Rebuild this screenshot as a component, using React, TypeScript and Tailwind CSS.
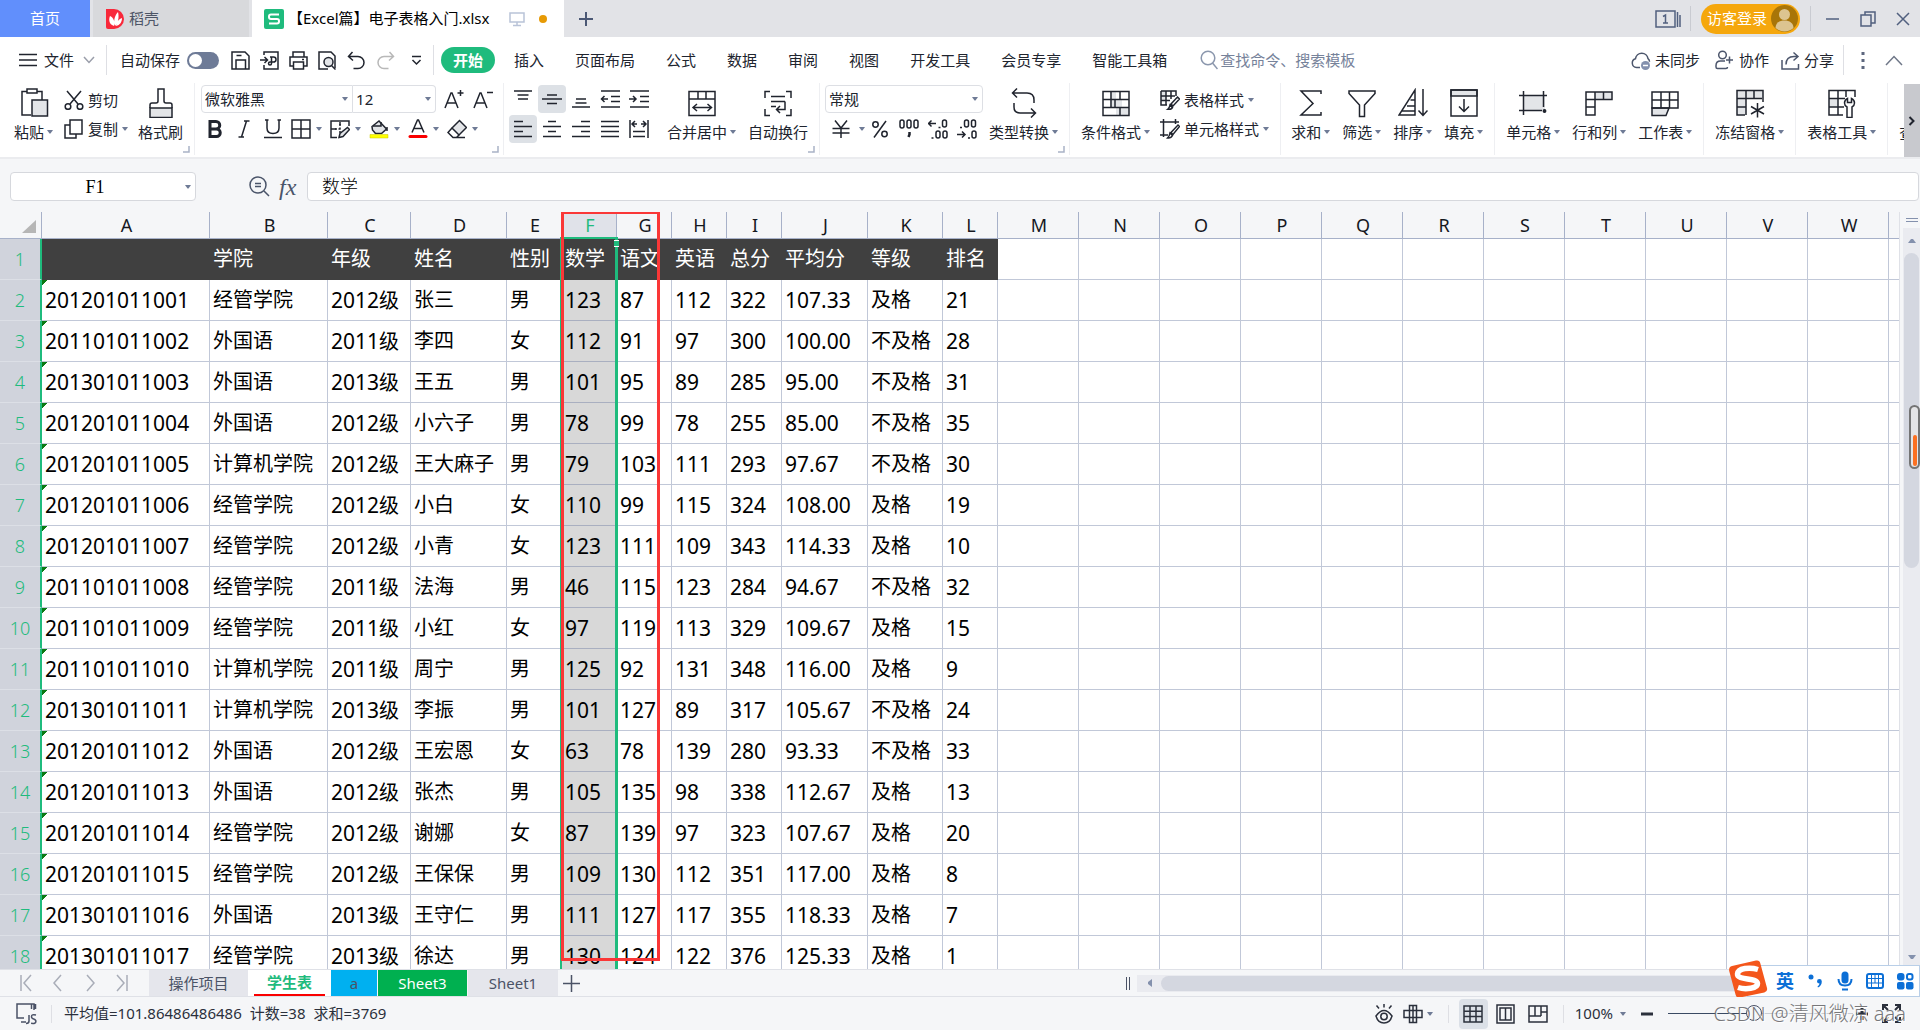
import type { ReactNode } from "react";

const UI = "font-['Noto_Sans','Noto_Sans_CJK_SC',sans-serif]";

/* ---------- drawing helpers ---------- */

function Svg({ w = 20, h = 20, sw = 1.5, children }: { w?: number; h?: number; sw?: number; children: ReactNode }) {
  return (
    <svg width={w} height={h} viewBox={`0 0 ${w} ${h}`} fill="none" stroke="currentColor" strokeWidth={sw} className="shrink-0" aria-hidden="true">
      {children}
    </svg>
  );
}

function Arrow() {
  return (
    <svg width="6" height="4" viewBox="0 0 6 4" className="shrink-0" aria-hidden="true">
      <path d="M0 0h6L3.5 3.5h-1z" fill="#6f7b96" />
    </svg>
  );
}

const shade = "#e3e5e8";

/* ---------- title bar ---------- */

function TitleBar() {
  return (
    <header className="flex h-[37px] shrink-0 items-center bg-[#e2e3e7] text-[15px]">
      <button className="h-full w-[90px] bg-[#618ffc] text-white">首页</button>
      <button className="ml-[3px] flex h-full w-[156px] items-center gap-1 bg-[#d8d9dc] pl-[13px] text-[#4d5566]">
        <Svg w={19} h={20} sw={0}>
          <path d="M0 0h8a10 10 0 0 1 10 10a10 10 0 0 1-10 10H2a2 2 0 0 1-2-2z" fill="#f8283a" />
          <path d="M8 17C2 15 3 9 4 7c4 2 5 6 4 10zM9 17c-2-5 0-11 3-14c1 4 1 10-3 14zM10 17c1-5 3-7 6-8c0 4-2 7-6 8z" fill="#fff" />
        </Svg>
        稻壳
      </button>
      <button className="ml-[3px] flex h-full w-[312px] items-center bg-white pl-3 text-black">
        <Svg w={20} h={20} sw={2}>
          <rect width="20" height="20" rx="2" fill="#1fbb7d" stroke="none" />
          <path d="M15 5.500H7a2 2 0 0 0-2 2v.5a2 2 0 0 0 2 2h6a2 2 0 0 1 2 2v.5a2 2 0 0 1-2 2H5" stroke="#fff" />
        </Svg>
        <span className="ml-1 whitespace-nowrap">【Excel篇】电子表格入门.xlsx</span>
        <span className="ml-5 text-[#b9c3d8]">
          <Svg w={16} h={16}>
            <path d="M1 2h14v9H1zM8 11v3M4 14.500h8" />
          </Svg>
        </span>
        <span className="ml-[14px] size-2 rounded-full bg-[#e79a05]" />
      </button>
      <button className="ml-[14px] text-[#4b5875]" aria-label="新建标签">
        <Svg w={16} h={16} sw={2}>
          <path d="M8 1v14M1 8h14" />
        </Svg>
      </button>
      <div className="ml-auto flex items-center text-[#51607f]">
        <button aria-label="窗口数">
          <Svg w={26} h={20}>
            <path d="M1 2h19v16H1zM22.500 3v15M25 6v12" />
            <path d="M8 7.500l2.500-1.500v8M8 14h5" />
          </Svg>
        </button>
        <span className="ml-[9px] h-[25px] w-px bg-[#c9cbd1]" />
        <button className="ml-[10px] flex h-[30px] w-[99px] items-center gap-1 rounded-full bg-[#f5a70d] pl-[6px] text-white">
          <span className="whitespace-nowrap">访客登录</span>
          <Svg w={27} h={27} sw={0}>
            <circle cx="13.500" cy="13.500" r="13.500" fill="#a87508" />
            <circle cx="13.500" cy="9.500" r="5.500" fill="#dcc490" />
            <path d="M4.500 23c0-5 4-7.500 9-7.500s9 2.500 9 7.500a13.500 13.500 0 0 1-18 0z" fill="#dcc490" />
          </Svg>
        </button>
        <span className="ml-[10px] h-[25px] w-px bg-[#c9cbd1]" />
        <button className="ml-[15px]" aria-label="最小化">
          <Svg w={13} h={14}>
            <path d="M0 7h13" />
          </Svg>
        </button>
        <button className="ml-[21px]" aria-label="还原">
          <Svg w={16} h={16}>
            <path d="M5 4V1h10v11h-4M1 4h10v11H1z" />
          </Svg>
        </button>
        <button className="mr-[10px] ml-5" aria-label="关闭">
          <Svg w={14} h={14}>
            <path d="M1 1l12 12M13 1L1 13" />
          </Svg>
        </button>
      </div>
    </header>
  );
}

/* ---------- menu row ---------- */

const MENUS = ["插入", "页面布局", "公式", "数据", "审阅", "视图", "开发工具", "会员专享", "智能工具箱"];

const QUICK: [string, ReactNode][] = [
  ["保存", <path key="p" d="M1 1h13l4 4v13H1zM5 18V9h9.500v9M5.500 4.500h5" />],
  ["输出", <path key="p" d="M4 4V1h14v17H4v-4M0 9h7M4.500 6L7.500 9l-3 3M10 6h3.500a2.500 2.500 0 0 1 0 5H12M11.500 6v6.500a1.500 1.500 0 1 1-1.500-1.500h5" />],
  ["打印", <path key="p" d="M4 6V1h11v5M4 15H1V6h17v9h-3M4.500 11h10v7h-10zM13 8.500h2" />],
  [
    "打印预览",
    <g key="p">
      <path d="M10 18H1V1h12l4 4v12" />
      <circle cx="10.500" cy="11" r="4.500" fill={shade} />
      <path d="M13.500 14.500l4 4" />
    </g>,
  ],
];

function Divider() {
  return <span className="h-[30px] w-px shrink-0 bg-[#dedfe4]" />;
}

function MenuRow() {
  return (
    <nav className="flex h-[46px] shrink-0 items-center bg-white text-[15px] whitespace-nowrap text-[#20242e]">
      <button className="flex items-center pl-[19px]">
        <Svg w={18} h={14}>
          <path d="M0 1.500h18M0 7h18M0 12.500h18" />
        </Svg>
        <span className="ml-[7px]">文件</span>
        <span className="ml-[9px] text-[#9a9eaa]">
          <Svg w={12} h={8}>
            <path d="M1 1l5 5.500L11 1" />
          </Svg>
        </span>
      </button>
      <span className="ml-[11px]" />
      <Divider />
      <label className="ml-[13px] flex items-center gap-[7px]">
        自动保存
        <input
          type="checkbox"
          className="h-[17px] w-8 appearance-none rounded-full bg-[#6e7b97] before:mt-[2px] before:ml-[2px] before:block before:size-[13px] before:rounded-full before:bg-white"
        />
      </label>
      <div className="ml-3 flex items-center gap-[10px]">
        {QUICK.map(([name, art]) => (
          <button key={name} aria-label={name}>
            <Svg w={19} h={19}>{art}</Svg>
          </button>
        ))}
        <button aria-label="撤销">
          <Svg w={19} h={19}>
            <path d="M5.500 1L1.500 5.500L6 9.500M2 5.500h9a6 6 0 0 1 0 12H6.500" />
          </Svg>
        </button>
        <button className="text-[#b8b8b8]" aria-label="恢复">
          <Svg w={19} h={19}>
            <path d="M13.500 1l4 4.500L13 9.500M17 5.500H8a6 6 0 0 0 0 12h4.500" />
          </Svg>
        </button>
        <button className="ml-[6px]" aria-label="自定义快速访问">
          <Svg w={11} h={12}>
            <path d="M1 2.500h9M1.500 6l4 4l4-4" />
          </Svg>
        </button>
      </div>
      <span className="ml-[11px]" />
      <Divider />
      <button className="ml-[7px] h-[26px] w-[54px] rounded-full bg-[#1fbb7d] font-bold text-white">开始</button>
      <div className="ml-[19px] flex gap-[31px]">
        {MENUS.map((m) => (
          <button key={m}>{m}</button>
        ))}
      </div>
      <label className="ml-[33px] flex items-center gap-[2px] text-[#8b97ad]">
        <Svg w={18} h={20}>
          <circle cx="8" cy="8" r="6.800" />
          <path d="M12.500 13l5 6" />
        </Svg>
        <input aria-label="查找命令" placeholder="查找命令、搜索模板" className="w-[150px] bg-transparent outline-none placeholder:text-[#76829a]" />
      </label>
      <div className="ml-auto flex items-center">
        <button className="flex items-center gap-1">
          <Svg w={20} h={21}>
            <path d="M9 17.500H5.500a4.500 4.500 0 0 1-1-8.800a6.300 6.300 0 0 1 12.500 0a4 4 0 0 1 1.500 3" stroke="#4c566c" />
            <circle cx="14.500" cy="15.500" r="4.500" fill="#8390ad" stroke="none" />
            <path d="M12 15.500h5" stroke="#fff" />
          </Svg>
          未同步
        </button>
        <button className="ml-[15px] flex items-center gap-[5px]">
          <Svg w={19} h={20}>
            <g stroke="#4c566c">
              <circle cx="7.500" cy="5" r="3.800" />
              <path d="M10 11H5.500C2 11 1 13 1 15.500V17q0 1.500 1.500 1.500H11q1.500 0 1.500-1.500M14.500 6.500v7M11 10h7" />
            </g>
          </Svg>
          协作
        </button>
        <button className="ml-3 flex items-center gap-1">
          <Svg w={19} h={19}>
            <path d="M1 9v9h16.500v-5M5 13.500c0-5 3-8 8-8h3.500M12.500 1.500l4.500 4l-4.500 4" stroke="#4c566c" />
          </Svg>
          分享
        </button>
        <span className="ml-[9px]" />
        <Divider />
        <button className="ml-[17px]" aria-label="更多">
          <Svg w={4} h={18} sw={0}>
            <path d="M.5 1h3v3h-3zM.5 8h3v3h-3zM.5 15h3v3h-3z" fill="#5d677e" />
          </Svg>
        </button>
        <button className="mr-[17px] ml-5" aria-label="折叠功能区">
          <Svg w={18} h={11}>
            <path d="M1 10l8-8.500L17 10" stroke="#6f7788" />
          </Svg>
        </button>
      </div>
    </nav>
  );
}

/* ---------- ribbon ---------- */

function Group({ children, launcher }: { children: ReactNode; launcher?: boolean }) {
  return (
    <section className="flex shrink-0 flex-col border-r border-[#eeeff2]">
      <div className="flex h-[60px] px-[11px] pt-[2px]">{children}</div>
      {launcher && (
        <span className="mt-[3px] mr-1 self-end text-[#a9b2c6]">
          <Svg w={7} h={7}>
            <path d="M0 6h6V0" />
          </Svg>
        </span>
      )}
    </section>
  );
}

function Big({ label, arrow = true, children }: { label: string; arrow?: boolean; children: ReactNode }) {
  return (
    <button className="flex shrink-0 flex-col items-center pt-[3px]">
      <Svg w={30} h={30}>{children}</Svg>
      <span className="mt-1 flex items-center gap-[3px] leading-5">
        {label}
        {arrow && <Arrow />}
      </span>
    </button>
  );
}

function Small({ label, arrow, children }: { label: string; arrow?: boolean; children: ReactNode }) {
  return (
    <button className="flex h-7 items-center gap-1">
      <Svg>{children}</Svg>
      <span className="flex items-center gap-1">
        {label}
        {arrow && <Arrow />}
      </span>
    </button>
  );
}

function Tool({ label, active, children }: { label: string; active?: boolean; children: ReactNode }) {
  return (
    <button aria-label={label} className={`flex size-7 items-center justify-center rounded-sm ${active ? "bg-[#dde1e6]" : ""}`}>
      <Svg>{children}</Svg>
    </button>
  );
}

function DropTool({ label, children }: { label: string; children: ReactNode }) {
  return (
    <button aria-label={label} className="flex h-7 w-[38px] items-center gap-[5px] pl-[3px]">
      <Svg>{children}</Svg>
      <Arrow />
    </button>
  );
}

function Picker({ label, value, box }: { label: string; value: string; box: string }) {
  return (
    <span className={`flex h-7 items-center border border-[#dddfe4] bg-white pr-1 ${box}`}>
      <select aria-label={label} className="min-w-0 flex-1 appearance-none pl-[3px] outline-none">
        <option>{value}</option>
      </select>
      <Arrow />
    </span>
  );
}

function Ribbon() {
  return (
    <div className="flex h-[76px] shrink-0 overflow-hidden border-b-2 border-[#ebecef] bg-white text-[15px] whitespace-nowrap text-[#20242e]">
      <div className="flex min-w-0 flex-1 overflow-hidden pb-[2px]">
        <Group launcher>
          <span className="ml-[3px]" />
          <Big label="粘贴">
            <path d="M8 3.500H3V27h9M18 3.500h5V12" />
            <path d="M8 1h10v4H8z" fill="#fff" />
            <path d="M13 12h15.500v16H13z" fill={shade} />
          </Big>
          <div className="ml-[11px] flex flex-col gap-[2px] pt-px">
            <Small label="剪切">
              <path d="M3 1l11 13M17 1L6 14" />
              <circle cx="4" cy="16.500" r="2.800" />
              <circle cx="16" cy="16.500" r="2.800" />
            </Small>
            <Small label="复制" arrow>
              <path d="M6 6H1v13h11v-4M6 1h12v14H6z" />
            </Small>
          </div>
          <span className="ml-[10px]" />
          <Big label="格式刷" arrow={false}>
            <path d="M4 20h22v9.500H4z" fill={shade} />
            <path d="M4 20v-3q0-2 2-2h4q2 0 2-2V1h6v12q0 2 2 2h4q2 0 2 2v3" />
          </Big>
        </Group>

        <Group launcher>
          <div className="-mx-[5px] flex flex-col gap-[2px]">
            <div className="flex">
              <Picker label="字体" value="微软雅黑" box="w-[152px] rounded-l-sm" />
              <Picker label="字号" value="12" box="w-[83px] rounded-r-sm border-l-0" />
              <span className="ml-1 flex gap-px">
                <Tool label="增大字号">
                  <path d="M1 19L7 4h1l6 15M3 14h9M16.500 1v6M13.500 4h6" />
                </Tool>
                <Tool label="减小字号">
                  <path d="M1 19L7 4h1l6 15M3 14h9M14 3.500h6" />
                </Tool>
              </span>
            </div>
            <div className="flex gap-px">
              <Tool label="加粗">
                <path d="M5 2.500h6a3.500 3.500 0 0 1 0 7.500H5zM5 10h6.500a3.700 3.700 0 0 1 0 7.500H5z" strokeWidth="3" />
              </Tool>
              <Tool label="倾斜">
                <path d="M10 2h5.500M4.500 18H10M12.500 2L7.500 18" />
              </Tool>
              <Tool label="下划线">
                <path d="M4 1v8q0 5.500 6 5.500T16 9V1M2 1h3.500M14.500 1H18M1 18.500h18" />
              </Tool>
              <DropTool label="边框">
                <path d="M1 1h18v18H1zM10 1v18M1 10h18" />
              </DropTool>
              <DropTool label="绘图边框">
                <path d="M7 18.500H1V2h18v5M1 10h5M10 6V3" />
                <path d="M5 10h6M10 5v9" strokeDasharray="2 1.500" />
                <path d="M9 18.500l1-4l7.500-6l2 2L13 17.500z" fill={shade} />
              </DropTool>
              <DropTool label="填充颜色">
                <path d="M3 7.500L10 2l7.500 8l-5 4.500h-6L3.500 11z" fill={shade} />
                <path d="M4 7h8V3M18 8v4" />
                <path d="M1 15.500h18v3.500H1z" fill="#ffff00" strokeWidth=".5" stroke="#c8c800" />
              </DropTool>
              <DropTool label="字体颜色">
                <path d="M4 13.500L9.500 1h1L16 13.500M6 9.500h8" />
                <path d="M2 17.500h16" stroke="#fa0000" strokeWidth="3" strokeLinecap="round" />
              </DropTool>
              <DropTool label="清除">
                <path d="M5 9l7.500-7.500l7 7L12 16z" fill={shade} />
                <path d="M5 9l-4 4.500l5 5h3.500L12 16M10 18.500h8" />
              </DropTool>
            </div>
          </div>
        </Group>

        <Group launcher>
          <div className="-ml-[6px] flex flex-col gap-[2px]">
            <div className="flex gap-px">
              <Tool label="顶端对齐">
                <path d="M1 2h18M4.500 6h11M5 10h10" />
              </Tool>
              <Tool label="垂直居中" active>
                <path d="M0 10h20M5 6h10M5 14.500h10" />
              </Tool>
              <Tool label="底端对齐">
                <path d="M1 18h18M4.500 14h11M5 10h10" />
              </Tool>
              <Tool label="减少缩进">
                <path d="M1 2h19M11 7.500h9M11 12.500h9M1 18h19M1 10h7M4.500 7L1.500 10l3 3" />
              </Tool>
              <Tool label="增加缩进">
                <path d="M1 2h19M11 7.500h9M11 12.500h9M1 18h19M0 10h7M4 7l3 3l-3 3" />
              </Tool>
            </div>
            <div className="flex gap-px">
              <Tool label="左对齐" active>
                <path d="M1 2.500h9M1 7.500h18M1 12.500h9M1 17.500h18" />
              </Tool>
              <Tool label="水平居中">
                <path d="M6 2.500h8M1 7.500h18M6 12.500h8M1 17.500h18" />
              </Tool>
              <Tool label="右对齐">
                <path d="M10 2.500h9M1 7.500h18M10 12.500h9M1 17.500h18" />
              </Tool>
              <Tool label="两端对齐">
                <path d="M1 2.500h18M1 7.500h18M1 12.500h18M1 17.500h18" />
              </Tool>
              <Tool label="分散对齐">
                <path d="M1 1v18M19 1v18M3 5h5M6 2L3 5l3 3M17 5h-5M14 2l3 3l-3 3M4 12.500h12M4 17.500h12" />
              </Tool>
            </div>
          </div>
          <span className="ml-[14px]" />
          <Big label="合并居中">
            <path d="M2 3.500h26v24H2zM2 11h26M11 4v7M19 4v7M7 19.500h17M10 16l-4 3.500l4 3.500M20.500 16l4 3.500l-4 3.500" />
          </Big>
          <span className="ml-3" />
          <Big label="自动换行" arrow={false}>
            <path d="M7 3.500H2V10M23 3.500h5V10M7 27.500H2V21M23 27.500h5V21M8 8.500h14M8 13.500h14M8 18.500h5M22 13.500v8h-8M17 18l-3.500 3.500L17 25" />
          </Big>
        </Group>

        <Group launcher>
          <div className="-ml-[6px] flex flex-col gap-[2px]">
            <Picker label="数字格式" value="常规" box="w-[158px] rounded-sm" />
            <div className="flex gap-px">
              <button aria-label="货币" className="flex h-7 w-10 items-center gap-2 pl-[6px]">
                <Svg>
                  <path d="M4 1.500L10 9l6-7.500M1.500 9.500h17M1.500 14h17M10 9v10" />
                </Svg>
                <Arrow />
              </button>
              <Tool label="百分比">
                <circle cx="5.500" cy="5.500" r="2.700" />
                <circle cx="14.500" cy="15" r="2.700" />
                <path d="M16 2L4 18.500" />
              </Tool>
              <Tool label="千位分隔">
                <rect x="1" y="1" width="4" height="8" rx="2" />
                <rect x="8" y="1" width="4" height="8" rx="2" />
                <rect x="15" y="1" width="4" height="8" rx="2" />
                <path d="M10.500 13v2.500L9.500 18" strokeWidth="2.500" />
              </Tool>
              <Tool label="增加小数位">
                <rect x="14.500" y="1" width="4" height="7" rx="2" />
                <rect x="8" y="12" width="4" height="7" rx="2" />
                <rect x="15" y="12" width="4" height="7" rx="2" />
                <path d="M0 4.500h8M3.500 1.500l-3 3l3 3M10.500 8.500h2M3.500 19h2" />
              </Tool>
              <Tool label="减少小数位">
                <rect x="7.500" y="1" width="4" height="7" rx="2" />
                <rect x="14.500" y="1" width="4" height="7" rx="2" />
                <rect x="15" y="12" width="4" height="7" rx="2" />
                <path d="M0 15.500h8M5 12.500l3 3l-3 3M3 8.500h2M11 19h2" />
              </Tool>
            </div>
          </div>
          <span className="ml-[6px]" />
          <Big label="类型转换">
            <path d="M4 5h14q7 0 7 7v3M8 .5L3.500 5L8 9.500M5 15v4q0 6 6 6h15M22 20.500l4.500 4.500l-4.500 4.500" />
          </Big>
        </Group>

        <Group>
          <Big label="条件格式">
            <path d="M9 3.500h6V20H9zM15 20h13v7.500H15zM15 11h6v9h-6z" fill={shade} stroke="none" />
            <path d="M2 3.500h26v24H2zM2 11.500h26M2 19.500h26M10 4v16M19 4v8M14 12v8M19 20v8" />
          </Big>
          <div className="ml-[10px] flex flex-col gap-[2px] pt-px">
            <Small label="表格样式" arrow>
              <path d="M1 1h5v10H1z" fill={shade} stroke="none" />
              <path d="M1 1h15v5M1 1v14h6M6 1v14M11 1v8M1 6h14M1 10.500h9M17.500 7l2 2l-6.500 7l-2-2zM10 15l2.500 2.500q-1.500 2.500-5 2q2-1.500 2.500-4.500z" />
            </Small>
            <Small label="单元格样式" arrow>
              <path d="M3.500 0v18M0 3h19M15.500 0v5M0 16h8M18 6l1.500 1.500l-6.500 8l-2-2zM10 14l2.500 2.500q-1.500 3-5 2.500q2-2 2.500-5z" />
            </Small>
          </div>
        </Group>

        <Group>
          <div className="-ml-px flex gap-3">
            <Big label="求和">
              <path d="M25 6V3H5l12 12.500L5 27h20v-3" />
            </Big>
            <Big label="筛选">
              <path d="M2 3h26v2.500L17.500 17v11.500h-5V17L2 5.500z" />
            </Big>
            <Big label="排序">
              <path d="M17 2v25H1zM12.500 12H17M9 18h8M4 23h13" />
              <path d="M25 1v26M20.500 22.500L25 27.500l4.500-5" />
            </Big>
            <Big label="填充">
              <path d="M2 2h26v6H2z" fill={shade} />
              <path d="M2 2h26v26H2zM15 11v12.500M10 18.500l5 5l5-5" />
            </Big>
          </div>
        </Group>

        <Group>
          <div className="flex gap-3">
            <Big label="单元格">
              <path d="M5 7h22v15H5z" fill={shade} stroke="none" />
              <path d="M1 7.500h28M5.500 3v24M25.500 3v16M1 22.500h23" />
              <circle cx="26.500" cy="23" r="1.200" fill="currentColor" />
            </Big>
            <Big label="行和列">
              <path d="M11 4h17v7H11z" fill={shade} stroke="none" />
              <path d="M2 4h26v7.500H11V27H2zM11 4v7M19.500 4v7M2 11.500h9M2 19h9" />
            </Big>
            <Big label="工作表">
              <path d="M2 20h17l-3 7.500H2z" fill={shade} />
              <path d="M2 4h26v16H2zM2 12h26M11 4v16M19.500 4v16" />
            </Big>
          </div>
        </Group>

        <Group>
          <Big label="冻结窗格">
            <path d="M2 2.500h26v8H11V27H2z" fill={shade} stroke="none" />
            <path d="M28 14V2.500H2V27h8M2 10.500h25M2 19h9M11 2.500V27M19 2.500v8M22.500 15v14.500M16 18.500l13 7.500M29 18.500L16 26" />
          </Big>
        </Group>

        <Group>
          <Big label="表格工具">
            <path d="M2 11h9v8H2z" fill={shade} stroke="none" />
            <path d="M28 9V2.500H2V27h14M2 10.500h16M2 19h15M11 2.500V27M19 2.500V9" />
            <path d="M20.500 10.500v4h4v-4q3 1.500 3 4.500q0 2.500-2.500 4v10.500h-5V19q-2.500-1.500-2.500-4q0-3 3-4.500z" fill="#fff" />
          </Big>
        </Group>

        <Group>
          <button className="pt-[37px] leading-5">查找</button>
        </Group>
      </div>
      <button className="mt-px flex w-4 shrink-0 items-center justify-center bg-[#c8c9ce]" aria-label="向右滚动">
        <Svg w={8} h={12} sw={2}>
          <path d="M1.500 2l4 4l-4 4" />
        </Svg>
      </button>
    </div>
  );
}

/* ---------- formula bar ---------- */

function FormulaBar() {
  return (
    <div className="flex h-[53px] shrink-0 items-center bg-[#f5f6f8] pt-[2px] pr-px pl-[10px]">
      <label className="flex h-[29px] w-[186px] items-center rounded-sm border border-[#d6d8dd] bg-white pr-1">
        <input aria-label="名称框" defaultValue="F1" className="w-0 flex-1 pr-[6px] text-center font-['Liberation_Serif',serif] text-lg outline-none" />
        <Arrow />
      </label>
      <button className="ml-[53px] text-[#4a5469]" aria-label="缩小">
        <Svg w={21} h={21}>
          <circle cx="9" cy="9" r="8" />
          <path d="M15 15l5 5M6 7.500h6M6 10.500h6" />
        </Svg>
      </button>
      <button className="ml-[9px] w-5 text-left font-['Liberation_Serif',serif] text-2xl leading-7 text-[#4a5469] italic" aria-label="插入函数">
        fx
      </button>
      <input
        aria-label="编辑栏"
        defaultValue="数学"
        className="ml-[8px] h-[29px] min-w-0 flex-1 rounded-sm border border-[#d6d8dd] bg-white pb-1 pl-[14px] font-['Noto_Sans_CJK_SC',sans-serif] text-lg font-light outline-none"
      />
    </div>
  );
}

/* ---------- sheet ---------- */

const COLUMNS: [string, string][] = [
  ["A", "w-[168px]"],
  ["B", "w-[118px]"],
  ["C", "w-[83px]"],
  ["D", "w-[96px]"],
  ["E", "w-[55px]"],
  ["F", "w-[55px]"],
  ["G", "w-[55px]"],
  ["H", "w-[55px]"],
  ["I", "w-[55px]"],
  ["J", "w-[86px]"],
  ["K", "w-[75px]"],
  ["L", "w-[55px]"],
  ...["M", "N", "O", "P", "Q", "R", "S", "T", "U", "V", "W"].map((c): [string, string] => [c, "w-[81px]"]),
];

const ROWS = [
  " 学院 年级 姓名 性别 数学 语文 英语 总分 平均分 等级 排名",
  "201201011001 经管学院 2012级 张三 男 123 87 112 322 107.33 及格 21",
  "201101011002 外国语 2011级 李四 女 112 91 97 300 100.00 不及格 28",
  "201301011003 外国语 2013级 王五 男 101 95 89 285 95.00 不及格 31",
  "201201011004 外国语 2012级 小六子 男 78 99 78 255 85.00 不及格 35",
  "201201011005 计算机学院 2012级 王大麻子 男 79 103 111 293 97.67 不及格 30",
  "201201011006 经管学院 2012级 小白 女 110 99 115 324 108.00 及格 19",
  "201201011007 经管学院 2012级 小青 女 123 111 109 343 114.33 及格 10",
  "201101011008 经管学院 2011级 法海 男 46 115 123 284 94.67 不及格 32",
  "201101011009 经管学院 2011级 小红 女 97 119 113 329 109.67 及格 15",
  "201101011010 计算机学院 2011级 周宁 男 125 92 131 348 116.00 及格 9",
  "201301011011 计算机学院 2013级 李振 男 101 127 89 317 105.67 不及格 24",
  "201201011012 外国语 2012级 王宏恩 女 63 78 139 280 93.33 不及格 33",
  "201201011013 外国语 2012级 张杰 男 105 135 98 338 112.67 及格 13",
  "201201011014 经管学院 2012级 谢娜 女 87 139 97 323 107.67 及格 20",
  "201201011015 经管学院 2012级 王保保 男 109 130 112 351 117.00 及格 8",
  "201301011016 外国语 2013级 王守仁 男 111 127 117 355 118.33 及格 7",
  "201301011017 经管学院 2013级 徐达 男 130 124 122 376 125.33 及格 1",
].map((line) => line.split(" "));

function CellText({ text }: { text: string }) {
  return (
    <>
      {text.split(/([\d.]+)/).map((part, i) =>
        i % 2 ? (
          <span key={i} className="text-[21px]">
            {part}
          </span>
        ) : (
          part
        ),
      )}
    </>
  );
}

function cellStyle(row: number, col: number) {
  if (row === 0 && col < 12) return "border-[#404040] bg-[#404040] text-white";
  if (col === 5) return "border-[#a9afc0] bg-[#d8d8d8] text-black";
  if (col === 0) return "border-[#c1c8d8] bg-[linear-gradient(135deg,#0b7a14_4px,transparent_4px)] text-black";
  return "border-[#c1c8d8] text-black";
}

function Sheet() {
  return (
    <div className="relative min-w-0 flex-1 overflow-hidden border-b border-[#dfe1e7] bg-white">
      <table className="w-full min-w-[1890px] table-fixed border-separate border-spacing-0">
        <colgroup>
          <col className="w-[42px]" />
          {COLUMNS.map(([name, width]) => (
            <col key={name} className={width} />
          ))}
          <col />
        </colgroup>
        <thead>
          <tr className="h-[27px] bg-[#f5f6f8] text-lg leading-6 text-[#15181f]">
            <th className="border-r border-b border-[#a7b1c9] p-0 align-bottom">
              <svg width="14" height="13" className="mb-[5px] ml-[22px]" aria-hidden="true">
                <path d="M14 0v13H0z" fill="#b6b6b6" />
              </svg>
            </th>
            {COLUMNS.map(([name]) => (
              <th
                key={name}
                scope="col"
                className={`border-r border-b border-[#a7b1c9] p-0 pb-px pl-[2px] font-normal ${name === "F" ? "bg-[#e0e2e9] text-[#1fbb7d]" : ""}`}
              >
                {name}
              </th>
            ))}
            <th className="border-b border-[#a7b1c9]" />
          </tr>
        </thead>
        <tbody>
          {ROWS.map((cells, r) => (
            <tr key={r} className="h-[41px]">
              <th
                scope="row"
                className="border-r-2 border-b border-r-[#1fbb7d] border-b-[#dcdfe6] bg-[#d0d3dc] p-0 text-lg leading-6 font-light text-[#1fbb7d]"
              >
                {r + 1}
              </th>
              {COLUMNS.map(([name], c) => (
                <td key={name} className={`overflow-hidden border-r border-b p-0 pl-[3px] text-xl leading-8 whitespace-nowrap ${cellStyle(r, c)}`}>
                  {cells[c] && <CellText text={cells[c]} />}
                </td>
              ))}
              <td className="border-b border-[#c1c8d8]" />
            </tr>
          ))}
        </tbody>
      </table>
      {/* column selection outline, its fill handle and the red marker frame */}
      <div className="absolute top-[25px] -bottom-1 left-[560px] w-[58px] border-2 border-r-3 border-[#1fbb7d]" />
      <div className="absolute top-7 left-[614px] h-[7px] w-[5px] border-y border-white bg-[#1fbb7d]" />
      <div className="absolute -top-px bottom-[8px] left-[561px] w-[99px] border-3 border-[#fa3737]" />
    </div>
  );
}

function VerticalScroll() {
  return (
    <div className="relative flex w-[21px] shrink-0 flex-col border-l border-[#dfe1e7] bg-[#f5f6f8] pl-[3px]">
      <div className="flex h-4 items-center justify-center text-[#8491ad]">
        <Svg w={12} h={6} sw={1}>
          <path d="M0 1.500h12M0 4.500h12" />
        </Svg>
      </div>
      <div className="flex flex-1 flex-col items-center bg-[#eaebf0] py-[10px]">
        <Svg w={8} h={5} sw={0}>
          <path d="M0 5h8L5 1H3z" fill="#8491ad" />
        </Svg>
        <div className="mt-[10px] h-[315px] w-[15px] rounded-full bg-[#d4d7e0]" />
        <span className="mt-auto">
          <Svg w={8} h={5} sw={0}>
            <path d="M0 0h8L5 4H3z" fill="#8491ad" />
          </Svg>
        </span>
      </div>
      <div className="absolute top-[193px] right-0 flex h-16 w-[11px] items-end justify-center rounded-full border-2 border-[#747474] bg-[#e4e4e6] pb-px">
        <span className="h-[31px] w-[4px] rounded-full bg-[#fb7021]" />
      </div>
    </div>
  );
}

/* ---------- sheet tabs ---------- */

const NAV: [string, string][] = [
  ["第一张", "M1 1v16M11 1L4 9l7 8"],
  ["上一张", "M9 1L2 9l7 8"],
  ["下一张", "M3 1l7 8l-7 8"],
  ["最后一张", "M11 1v16M1 1l7 8l-7 8"],
];

function SheetTabs() {
  return (
    <div className="relative flex h-[27px] shrink-0 items-center border-b border-[#dfe1e7] bg-[#f5f6f8] text-[15px] whitespace-nowrap text-[#4b5366]">
      <div className="flex w-[149px] items-center gap-5 pl-5 text-[#a9adb8]">
        {NAV.map(([name, d]) => (
          <button key={name} aria-label={name}>
            <Svg w={12} h={18}>
              <path d={d} />
            </Svg>
          </button>
        ))}
      </div>
      <button className="h-full w-[99px] bg-[#e5e6ec]">操作项目</button>
      <button className="h-full w-[83px] bg-white px-[6px] font-bold text-[#1fbb7d]">
        <span className="block h-full border-b-2 border-[#fa0000] leading-6">学生表</span>
      </button>
      <button className="h-full w-[46px] bg-[#00b0f0]">a</button>
      <button className="ml-px h-full w-[89px] bg-[#00b050] text-white">Sheet3</button>
      <button className="ml-px h-full w-[90px] bg-[#e5e6ec]">Sheet1</button>
      <button className="ml-[5px]" aria-label="新建工作表">
        <Svg w={17} h={17}>
          <path d="M8.500 0v17M0 8.500h17" />
        </Svg>
      </button>
      <div className="ml-auto flex w-[794px] items-center">
        <Svg w={5} h={13} sw={1}>
          <path d="M.5 0v13M3.500 0v13" />
        </Svg>
        <div className="ml-[6px] flex h-[17px] flex-1 items-center bg-[#eaebf0]">
          <span className="flex w-6 justify-center">
            <Svg w={5} h={8} sw={0}>
              <path d="M5 0v8L1 5V3z" fill="#8491ad" />
            </Svg>
          </span>
          <div className="h-[15px] flex-1 rounded-full bg-[#d4d7e0]" />
        </div>
      </div>
      <ImeBar />
    </div>
  );
}

function ImeBar() {
  return (
    <div className="absolute right-0 -bottom-px flex h-8 items-center border border-[#b9cfe8] bg-white pr-[5px] text-[#0c6fd6]">
      <span className="-mt-[5px] -ml-5">
        <Svg w={40} h={38} sw={0}>
          <path d="M4 6L28 .6q3.500-.8 4.300 2.700L39 28q.9 3.600-2.700 4.500L12 37.500q-3.500.7-4.400-2.800L1.200 11Q.5 7 4 6z" fill="#f4561b" />
          <path d="M30 9.500c-8-2.500-20-1.500-20.500 4.500c-.5 6.500 19.500 3.500 20 9.500c.2 5-12 6.500-19.500 4" fill="none" stroke="#fff" strokeWidth="5.500" />
        </Svg>
      </span>
      <button className="ml-2 text-lg leading-6 font-bold">英</button>
      <button className="ml-[14px]" aria-label="中英标点">
        <Svg w={16} h={16} sw={0}>
          <circle cx="3" cy="4" r="2.500" fill="currentColor" />
          <path d="M9 8.500a2.400 2.400 0 1 1 4.800 0q0 4-3.800 6l-.5-1q2-1.500 2-3Q9 10.500 9 8.500z" fill="currentColor" />
        </Svg>
      </button>
      <button className="ml-[13px]" aria-label="语音">
        <Svg w={16} h={20} sw={2}>
          <rect x="4.500" y=".5" width="7" height="12" rx="3.500" fill="currentColor" stroke="none" />
          <path d="M1.500 8q0 6.500 6.500 6.500T14.500 8M5 18.500h6" />
        </Svg>
      </button>
      <button className="ml-[13px]" aria-label="软键盘">
        <Svg w={18} h={16}>
          <rect x="1" y="1" width="16" height="14" rx="2" strokeWidth="2" />
          <path d="M2 5.500h14M2 10h14M5.500 2v12M9 2v8M12.500 2v12" strokeWidth="1" />
        </Svg>
      </button>
      <button className="ml-[13px]" aria-label="工具箱">
        <Svg w={17} h={17} sw={0}>
          <rect width="7.500" height="7.500" rx="3" fill="currentColor" />
          <rect x="10" y="1" width="5.500" height="5.500" rx="2" stroke="currentColor" strokeWidth="2" />
          <rect y="9" width="7.500" height="7.500" rx="2" fill="currentColor" />
          <rect x="9" y="9" width="7.500" height="7.500" rx="2" fill="currentColor" />
        </Svg>
      </button>
    </div>
  );
}

/* ---------- status bar ---------- */

function StatusBar() {
  return (
    <footer className="relative flex h-[33px] shrink-0 items-center bg-[#f5f6f8] text-[15px] whitespace-nowrap text-[#2b303c]">
      <button className="ml-4" aria-label="JS 宏">
        <Svg w={21} h={22}>
          <path d="M8 15H1V1h17v6M5 19h5M15.500 1v5M19.500 1v5M13 12v6q0 2.500-3 2.500M20 12q-4.500-1-4.500 1.500q0 2 2.200 2.500t2.200 2.500q0 2.500-4.800 1.800" stroke="#4a5166" />
        </Svg>
      </button>
      <span className="ml-[14px] h-[18px] w-px bg-[#dedfe4]" />
      <span className="ml-3 flex gap-2">
        <span>平均值=101.86486486486</span>
        <span>计数=38</span>
        <span>求和=3769</span>
      </span>
      <div className="ml-auto flex items-center">
        <button aria-label="护眼模式">
          <Svg w={20} h={20}>
            <path d="M2 12q4-5.500 8-5.500T18 12q-2 7-8 7T2 12zM10 0v3.500M2.500 1.500l2.500 3M17.500 1.500l-2.500 3" />
            <circle cx="10" cy="12.500" r="3.200" />
          </Svg>
        </button>
        <button className="ml-[9px] flex items-center gap-1" aria-label="阅读模式">
          <Svg w={20} h={20}>
            <path d="M6.500 1.500h7v17h-7zM1 6.500h18v7H1zM10 1.500v17" />
          </Svg>
          <Arrow />
        </button>
        <span className="ml-[15px] h-[18px] w-px bg-[#dedfe4]" />
        <button className="ml-[10px] flex h-[30px] w-[29px] items-center justify-center rounded-sm bg-[#dbe0e7]" aria-label="普通视图">
          <Svg w={20} h={18}>
            <path d="M1 1h18v16H1zM1 6.300h18M1 11.600h18M7 1v16M13 1v16" />
          </Svg>
        </button>
        <button className="ml-2" aria-label="页面布局">
          <Svg w={19} h={20}>
            <path d="M1 1h17v18H1zM4 4h11v12H4zM9.500 4v12" />
          </Svg>
        </button>
        <button className="ml-[13px]" aria-label="分页预览">
          <Svg w={20} h={18}>
            <path d="M1 1h18v16H1zM7 1v10M13 1v10M1 11h12M13 7h6" />
          </Svg>
        </button>
        <span className="ml-[15px] h-[18px] w-px bg-[#dedfe4]" />
        <button className="ml-[11px] flex items-center gap-[7px]">
          100%
          <Arrow />
        </button>
        <button className="ml-[15px]" aria-label="缩小显示比例">
          <Svg w={12} h={12} sw={3}>
            <path d="M0 6h12" />
          </Svg>
        </button>
        <input
          type="range"
          aria-label="显示比例"
          min="0"
          max="100"
          defaultValue="46"
          className="ml-[15px] h-4 w-[185px] appearance-none bg-transparent [&::-webkit-slider-runnable-track]:h-px [&::-webkit-slider-runnable-track]:bg-[linear-gradient(to_right,#3a4a63_46%,#c9cdd5_46%)] [&::-webkit-slider-thumb]:-mt-2 [&::-webkit-slider-thumb]:size-4 [&::-webkit-slider-thumb]:appearance-none [&::-webkit-slider-thumb]:rounded-full [&::-webkit-slider-thumb]:border [&::-webkit-slider-thumb]:border-[#4a5166] [&::-webkit-slider-thumb]:bg-[#f5f6f8]"
        />
        <button className="ml-[3px]" aria-label="放大显示比例">
          <Svg w={12} h={12} sw={3}>
            <path d="M0 6h12M6 0v12" />
          </Svg>
        </button>
        <button className="mr-[19px] ml-[14px]" aria-label="全屏">
          <Svg w={19} h={19} sw={2}>
            <path d="M1 6V1h5M13 1h5v5M18 13v5h-5M6 18H1v-5M1 1l5 5M18 1l-5 5M18 18l-5-5M1 18l5-5" />
          </Svg>
        </button>
      </div>
      <span className="pointer-events-none absolute right-[14px] text-xl leading-6 font-light text-[#77777a] [text-shadow:1px_1px_0_#fff]">CSDN @清风微凉 aaa</span>
    </footer>
  );
}

export default function App() {
  return (
    <div className={`flex h-screen flex-col overflow-hidden ${UI}`}>
      <TitleBar />
      <MenuRow />
      <Ribbon />
      <FormulaBar />
      <main className="flex min-h-0 flex-1">
        <Sheet />
        <VerticalScroll />
      </main>
      <SheetTabs />
      <StatusBar />
    </div>
  );
}
